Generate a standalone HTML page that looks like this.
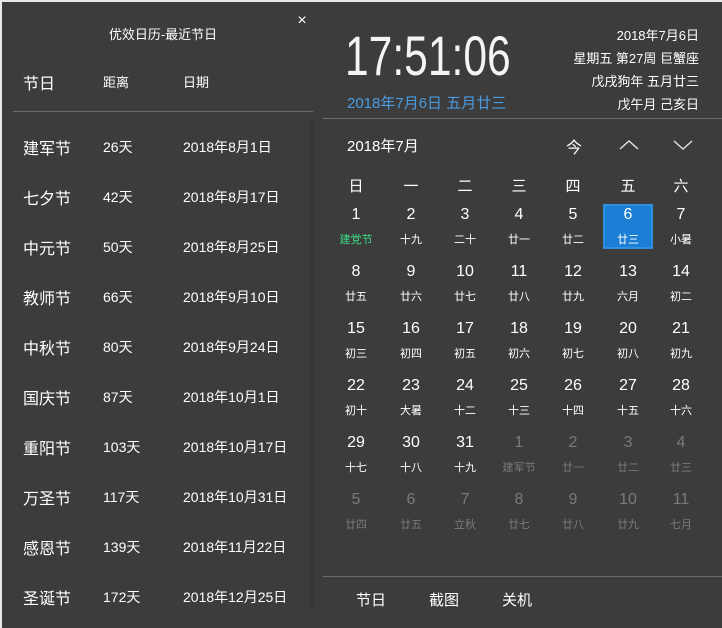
<!DOCTYPE html>
<html><head><meta charset="utf-8"><style>
*{margin:0;padding:0;box-sizing:border-box}
body{width:722px;height:628px;background:#3c3c3c;color:#fff;font-family:"Liberation Sans","Noto Sans CJK SC",sans-serif;position:relative;overflow:hidden}
.a{position:absolute;white-space:nowrap}
.c{position:absolute;white-space:nowrap;transform:translateX(-50%);text-align:center}
.r{position:absolute;white-space:nowrap;transform:translateX(-100%);text-align:right}
.ln{position:absolute;height:1px;background:#6a6a6a}
</style></head><body>
<div style="position:absolute;left:0;top:0;width:722px;height:2px;background:#e8e8e8"></div>
<div style="position:absolute;left:0;top:0;width:2px;height:628px;background:#e8e8e8"></div>
<div style="position:absolute;left:309px;top:120px;width:5px;height:487px;background:#373737"></div>
<div class="c" style="left:163px;top:24px;font-size:13px">优效日历-最近节日</div>
<div class="c" style="left:302px;top:12px;font-size:16px">×</div>
<div class="a" style="left:23px;top:70px;font-size:16px">节日</div>
<div class="a" style="left:103px;top:72px;font-size:13px">距离</div>
<div class="a" style="left:183px;top:72px;font-size:13px">日期</div>
<div class="ln" style="left:13px;top:111px;width:300px"></div>
<div id="list"></div>
<div class="a" style="left:345px;top:23px;font-size:56px;color:#f4f4f4;transform:scaleX(0.76);transform-origin:0 0">17:51:06</div>
<div class="a" style="left:347px;top:92px;font-size:15px;color:#4a9be0">2018年7月6日 五月廿三</div>
<div class="r" style="left:699px;top:25px;font-size:13px">2018年7月6日</div>
<div class="r" style="left:699px;top:48px;font-size:13px">星期五 第27周 巨蟹座</div>
<div class="r" style="left:699px;top:71px;font-size:13px">戊戌狗年 五月廿三</div>
<div class="r" style="left:699px;top:94px;font-size:13px">戊午月 己亥日</div>
<div class="ln" style="left:323px;top:118px;width:399px"></div>
<div class="a" style="left:347px;top:135px;font-size:15px">2018年7月</div>
<div class="c" style="left:574px;top:134px;font-size:16px">今</div>
<svg class="a" style="left:619px;top:139px" width="20" height="12"><path d="M1 10L10 2L19 10" stroke="#ddd" stroke-width="1.5" fill="none"/></svg>
<svg class="a" style="left:673px;top:139px" width="20" height="12"><path d="M1 2L10 10L19 2" stroke="#ddd" stroke-width="1.5" fill="none"/></svg>
<div style="position:absolute;left:603px;top:204px;width:50px;height:45px;background:#1a7fd4;border:2px solid #2f8ee0"></div>
<div id="cal"></div>
<div class="ln" style="left:323px;top:576px;width:399px"></div>
<div class="c" style="left:371px;top:589px;font-size:15px">节日</div>
<div class="c" style="left:444px;top:589px;font-size:15px">截图</div>
<div class="c" style="left:517px;top:589px;font-size:15px">关机</div>
<script>
var L=[["建军节","26天","2018年8月1日"],["七夕节","42天","2018年8月17日"],["中元节","50天","2018年8月25日"],["教师节","66天","2018年9月10日"],["中秋节","80天","2018年9月24日"],["国庆节","87天","2018年10月1日"],["重阳节","103天","2018年10月17日"],["万圣节","117天","2018年10月31日"],["感恩节","139天","2018年11月22日"],["圣诞节","172天","2018年12月25日"]];
var h="";L.forEach(function(r,i){var y=138+i*50;h+='<div class="a" style="left:23px;top:'+(y-3)+'px;font-size:16px">'+r[0]+'</div><div class="a" style="left:103px;top:'+(y-1)+'px;font-size:14px">'+r[1]+'</div><div class="a" style="left:183px;top:'+(y-1)+'px;font-size:14px">'+r[2]+'</div>';});
document.getElementById("list").innerHTML=h;
var X=[356,411,465,519,573,628,681];
var W=["日","一","二","三","四","五","六"];
var d=[["1","建党节"],["2","十九"],["3","二十"],["4","廿一"],["5","廿二"],["6","廿三"],["7","小暑"],["8","廿五"],["9","廿六"],["10","廿七"],["11","廿八"],["12","廿九"],["13","六月"],["14","初二"],["15","初三"],["16","初四"],["17","初五"],["18","初六"],["19","初七"],["20","初八"],["21","初九"],["22","初十"],["23","大暑"],["24","十二"],["25","十三"],["26","十四"],["27","十五"],["28","十六"],["29","十七"],["30","十八"],["31","十九"],["1","建军节"],["2","廿一"],["3","廿二"],["4","廿三"],["5","廿四"],["6","廿五"],["7","立秋"],["8","廿七"],["9","廿八"],["10","廿九"],["11","七月"]];
h="";W.forEach(function(w,i){h+='<div class="c" style="left:'+X[i]+'px;top:175px;font-size:15px">'+w+'</div>';});
d.forEach(function(e,k){var c=k%7,r=Math.floor(k/7),y=206+r*57;var g=k>30?"#7a7a7a":"#fff";var lc=k==0?"#3ddc84":g;
h+='<div class="c" style="left:'+X[c]+'px;top:'+y+'px;font-size:16px;color:'+g+'">'+e[0]+'</div><div class="c" style="left:'+X[c]+'px;top:'+(y+25)+'px;font-size:11px;color:'+lc+'">'+e[1]+'</div>';});
document.getElementById("cal").innerHTML=h;
</script>
</body></html>
